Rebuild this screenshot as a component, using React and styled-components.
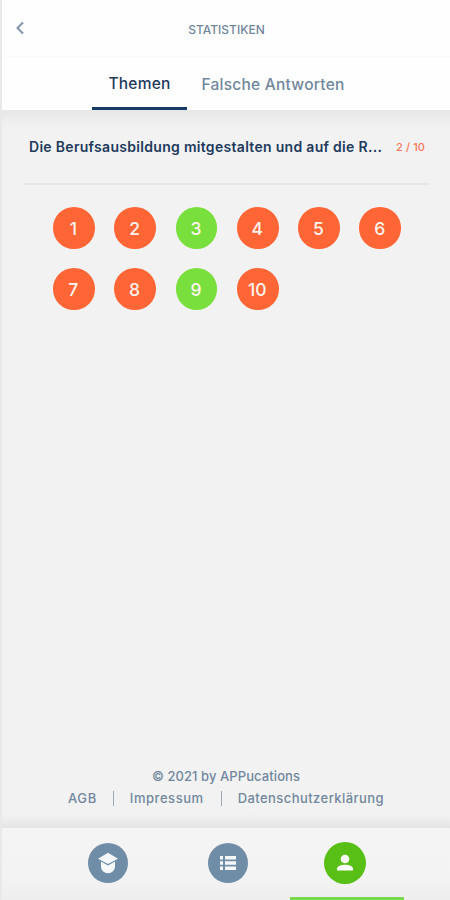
import React from 'react';
import styled, { createGlobalStyle } from 'styled-components';

const GlobalStyle = createGlobalStyle`
  * {
    box-sizing: border-box;
  }

  body {
    background: #f2f2f2;
    font-family: Inter, 'Open Sans', sans-serif;
    margin: 0;
  }
`;

const Screen = styled.div`
  background: #f2f2f2;
  border-left: 2px solid #e9e9e9;
  display: flex;
  flex-direction: column;
  height: 900px;
  overflow: hidden;
  width: 450px;
`;

const Header = styled.header`
  align-items: center;
  background: #fefefe;
  border-bottom: 1px solid #fafafa;
  display: grid;
  flex: none;
  grid-template-columns: 36px 1fr 36px;
  height: 57px;
`;

const BackButton = styled.button`
  background: none;
  border: 0;
  height: 14px;
  margin-left: 13px;
  padding: 0;
  width: 10px;

  svg {
    display: block;
  }
`;

const HeaderTitle = styled.h1`
  color: #71879b;
  font-size: 12px;
  font-weight: 500;
  letter-spacing: 0;
  line-height: 16px;
  margin: 4px 0 0;
  padding-left: 1px;
  text-align: center;
`;

const Tabs = styled.nav`
  background: #fefefe;
  display: flex;
  flex: none;
  height: 53px;
  padding-left: 90px;
`;

const Tab = styled.button`
  background: none;
  border: 0;
  border-bottom: 3px solid ${({ $active }) => ($active ? '#183a66' : 'transparent')};
  color: ${({ $active }) => ($active ? '#213a5c' : '#71879d')};
  font-family: inherit;
  font-size: 15.5px;
  font-weight: 500;
  letter-spacing: ${({ $spacing }) => $spacing}px;
  line-height: 20px;
  padding: ${({ $active }) => ($active ? '4px 0 0' : '6px 0 0 1px')};
  white-space: nowrap;
  width: ${({ $width }) => $width}px;
`;

const Content = styled.main`
  background: linear-gradient(#e7e7e7, #f2f2f2 18px);
  flex: 1;
  padding: 0 20px 0 22px;
`;

const Topic = styled.div`
  align-items: center;
  border-bottom: 2px solid #e7e7e7;
  display: flex;
  height: 75px;
  justify-content: space-between;
  padding: 0 5px 0 5px;
`;

const TopicTitle = styled.h2`
  color: #213a5c;
  font-size: 14px;
  font-weight: 600;
  letter-spacing: 0.3px;
  line-height: 20px;
  margin: 0;
  overflow: hidden;
  text-overflow: ellipsis;
  white-space: nowrap;
  width: 360px;
`;

const Score = styled.span`
  color: #f8765a;
  font-size: 11px;
  font-weight: 500;
  letter-spacing: 0.1px;
  line-height: 20px;
  white-space: nowrap;
`;

const Answers = styled.div`
  display: grid;
  gap: 19.6px;
  grid-template-columns: repeat(6, 41.7px);
  margin: 22px 0 0 29px;
`;

const Answer = styled.div`
  align-items: center;
  background: ${({ $correct }) => ($correct ? '#79df3c' : '#ff6535')};
  border-radius: 50%;
  color: #fff4ed;
  display: flex;
  font-size: 17.5px;
  font-weight: 500;
  height: 41.7px;
  justify-content: center;
  padding: 1px 1px 0 0;
`;

const Footer = styled.footer`
  align-items: center;
  background: linear-gradient(#f2f2f2 48px, #e5e5e5);
  color: #71879d;
  display: flex;
  flex: none;
  flex-direction: column;
  font-size: 13px;
  font-weight: 500;
  height: 62px;
  line-height: 18px;
  padding-top: 1px;
`;

const Copyright = styled.span`
  letter-spacing: 0.08px;
`;

const Links = styled.div`
  align-items: center;
  display: flex;
  height: 26px;
`;

const Link = styled.a`
  border-left: ${({ $first }) => ($first ? '0' : '1.5px solid #9daab5')};
  height: 15px;
  letter-spacing: ${({ $spacing }) => $spacing}px;
  line-height: 15px;
  padding: ${({ $first }) => ($first ? '0 16px 0 0' : '0 17px 0 16px')};

  &:last-child {
    padding-right: 0;
  }
`;

const BottomNav = styled.nav`
  background: linear-gradient(#f4f4f4, #f3f3f3 48px, #eeeeee);
  display: grid;
  flex: none;
  grid-template-columns: 120px 120px 114px;
  height: 72px;
  padding-left: 46px;
`;

const NavItem = styled.div`
  align-items: center;
  border-bottom: 3px solid ${({ $active }) => ($active ? '#79d84b' : 'transparent')};
  display: flex;
  justify-content: center;
  margin-left: ${({ $active }) => ($active ? 2 : 0)}px;
  margin-right: ${({ $active }) => ($active ? -2 : 0)}px;
`;

const NavIcon = styled.div`
  align-items: center;
  background: ${({ $active }) => ($active ? '#57bf15' : '#708da8')};
  border-radius: 50%;
  display: flex;
  height: ${({ $active }) => ($active ? 42 : 40)}px;
  justify-content: center;
  margin-right: ${({ $active }) => ($active ? 4 : 0)}px;
  width: ${({ $active }) => ($active ? 42 : 40)}px;
`;

const BackIcon = () => (
  <svg width="10" height="14" viewBox="0 0 10 14" fill="none">
    <path d="M8 1.5 2.5 7 8 12.5" stroke="#8292a8" strokeWidth="2" />
  </svg>
);

const GraduateIcon = () => (
  <svg width="22" height="22" viewBox="0 0 22 22" fill="#f5f7f9">
    <path d="M11 0.8 21 6.8 11 12 1 6.8Z" />
    <path d="M4 9.6 11 13.4 18 9.6V14C18 18.4 15 21.2 11 21.2S4 18.4 4 14Z" />
  </svg>
);

const ListIcon = () => (
  <svg width="18" height="16" viewBox="0 0 18 16" fill="#f5f7f9">
    <path d="M1 1h3v3.4H1zM1 6.3h3v3.4H1zM1 11.6h3V15H1zM6 1h11v3.4H6zM6 6.3h11v3.4H6zM6 11.6h11V15H6z" />
  </svg>
);

const PersonIcon = () => (
  <svg width="18" height="18" viewBox="0 0 18 18" fill="#fff">
    <circle cx="9" cy="5" r="4.3" />
    <path d="M1 16.5v-1.7C1 12 5.5 10.8 9 10.8S17 12 17 14.8v1.7Z" />
  </svg>
);

const answers = [false, false, true, false, false, false, false, false, true, false];

const App = () => (
  <Screen>
    <GlobalStyle />

    <Header>
      <BackButton aria-label="Zurück"><BackIcon /></BackButton>
      <HeaderTitle>STATISTIKEN</HeaderTitle>
    </Header>

    <Tabs>
      <Tab $active $width={95} $spacing={0.2}>Themen</Tab>
      <Tab $width={171} $spacing={0.25}>Falsche Antworten</Tab>
    </Tabs>

    <Content>
      <Topic>
        <TopicTitle>Die Berufsausbildung mitgestalten und auf die R...</TopicTitle>
        <Score>2 / 10</Score>
      </Topic>

      <Answers>
        {answers.map((correct, index) => (
          <Answer key={index} $correct={correct}>{index + 1}</Answer>
        ))}
      </Answers>
    </Content>

    <Footer>
      <Copyright>© 2021 by APPucations</Copyright>
      <Links>
        <Link $first $spacing={0.6}>AGB</Link>
        <Link $spacing={0.55}>Impressum</Link>
        <Link $spacing={0.43}>Datenschutzerklärung</Link>
      </Links>
    </Footer>

    <BottomNav>
      <NavItem><NavIcon><GraduateIcon /></NavIcon></NavItem>
      <NavItem><NavIcon><ListIcon /></NavIcon></NavItem>
      <NavItem $active><NavIcon $active><PersonIcon /></NavIcon></NavItem>
    </BottomNav>
  </Screen>
);

export default App;
